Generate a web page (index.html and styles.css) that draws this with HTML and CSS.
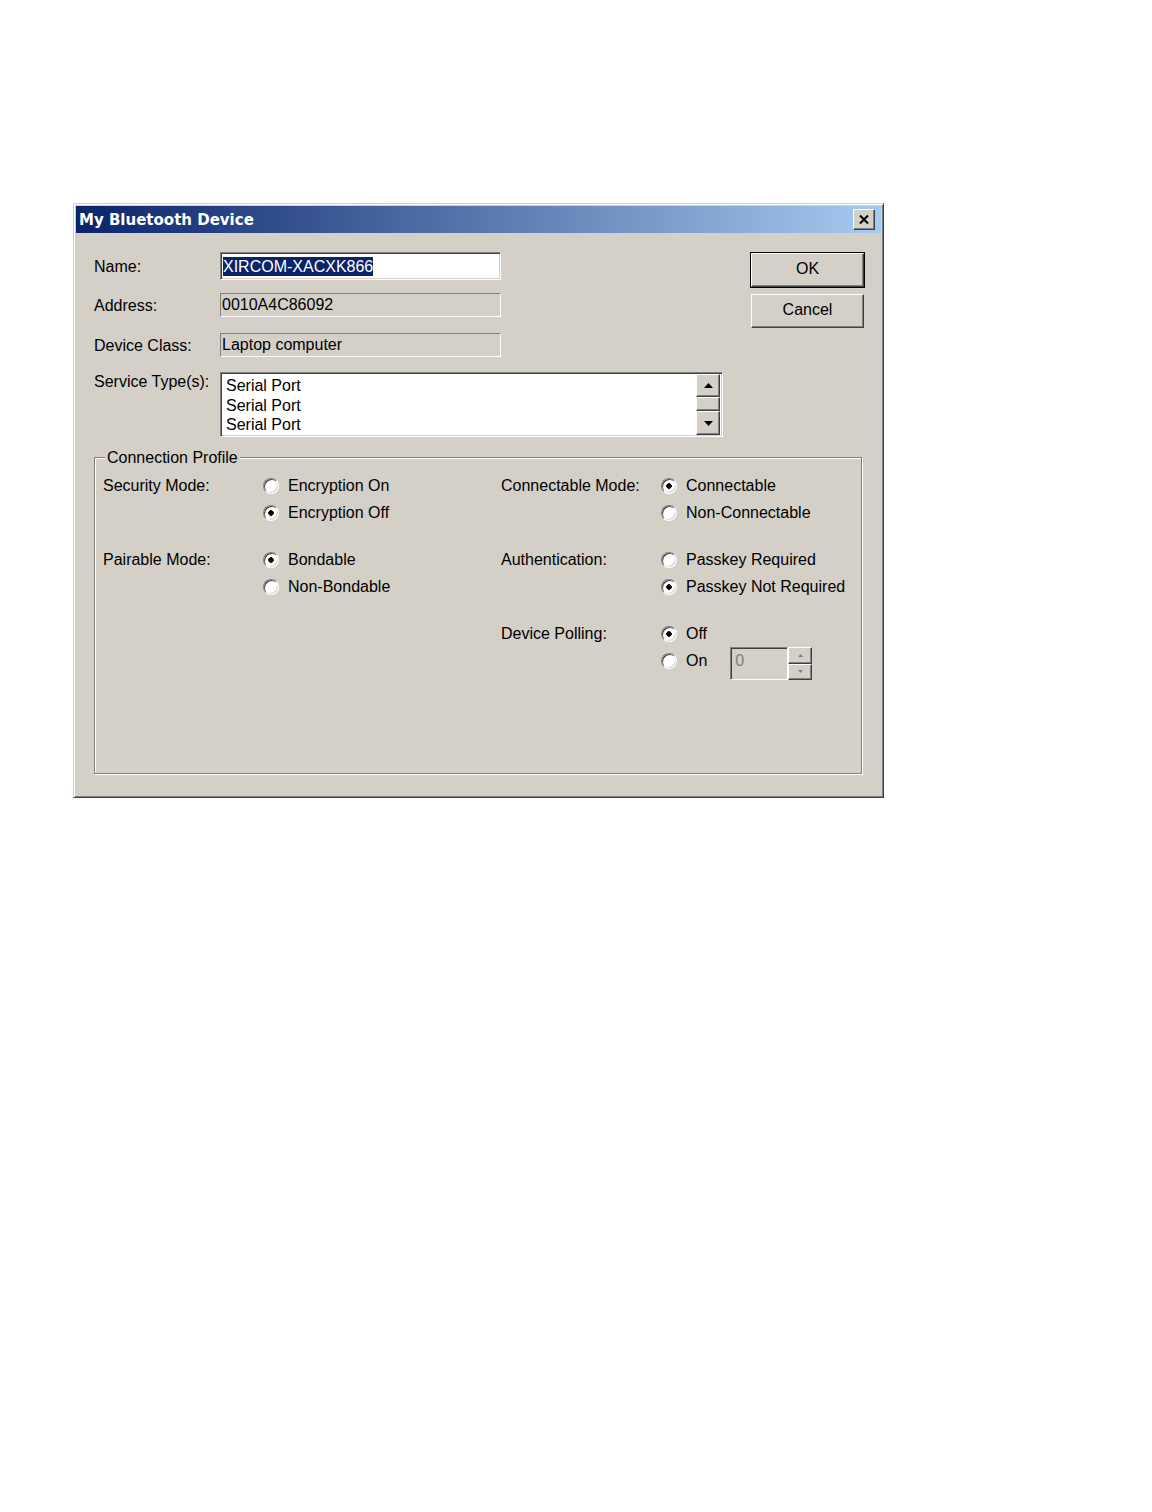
FILE: index.html
```html
<!DOCTYPE html>
<html lang="en">
<head>
  <meta charset="UTF-8" />
  <meta name="viewport" content="width=device-width, initial-scale=1" />
  <title>My Bluetooth Device</title>
  <link rel="stylesheet" href="styles.css">
</head>
<body>
  <div class="window">
    <div class="titlebar">
      <span class="title">My Bluetooth Device</span>
      <button class="close-btn" title="Close">
        <svg width="10" height="9" viewBox="0 0 10 9"><path d="M1 0.5 L9 8.5 M9 0.5 L1 8.5" stroke="#000" stroke-width="2"/></svg>
      </button>
    </div>

    <div class="content">
      <div class="top">
        <div class="form">
          <div class="lbl lbl-name">Name:</div>
          <div class="edit name-edit"><span class="sel">XIRCOM-XACXK866</span></div>

          <div class="lbl">Address:</div>
          <div class="edit ro">0010A4C86092</div>

          <div class="lbl">Device Class:</div>
          <div class="edit ro">Laptop computer</div>

          <div class="lbl lbl-top">Service Type(s):</div>
          <div class="listbox">
            <div class="items">
              <div>Serial Port</div>
              <div>Serial Port</div>
              <div>Serial Port</div>
            </div>
            <div class="vscroll">
              <div class="sb-btn sb-up">
                <svg width="9" height="5" viewBox="0 0 9 5"><polygon points="4.5,0 9,5 0,5" fill="#000"/></svg>
              </div>
              <div class="sb-thumb"></div>
              <div class="sb-btn sb-down">
                <svg width="9" height="5" viewBox="0 0 9 5"><polygon points="0,0 9,0 4.5,5" fill="#000"/></svg>
              </div>
            </div>
          </div>
        </div>

        <div class="buttons">
          <button class="btn default">OK</button>
          <button class="btn">Cancel</button>
        </div>
      </div>

      <fieldset class="group">
        <legend>Connection Profile</legend>
        <div class="group-grid">
          <div class="sec">
            <div class="flabel">Security Mode:</div>
            <div class="opts">
              <label class="opt"><input type="radio" class="radio" name="sec"> Encryption On</label>
              <label class="opt"><input type="radio" class="radio" name="sec" checked> Encryption Off</label>
            </div>
          </div>
          <div class="sec">
            <div class="flabel">Connectable Mode:</div>
            <div class="opts">
              <label class="opt"><input type="radio" class="radio" name="conn" checked> Connectable</label>
              <label class="opt"><input type="radio" class="radio" name="conn"> Non-Connectable</label>
            </div>
          </div>
          <div class="sec">
            <div class="flabel">Pairable Mode:</div>
            <div class="opts">
              <label class="opt"><input type="radio" class="radio" name="pair" checked> Bondable</label>
              <label class="opt"><input type="radio" class="radio" name="pair"> Non-Bondable</label>
            </div>
          </div>
          <div class="sec">
            <div class="flabel">Authentication:</div>
            <div class="opts">
              <label class="opt"><input type="radio" class="radio" name="auth"> Passkey Required</label>
              <label class="opt"><input type="radio" class="radio" name="auth" checked> Passkey Not Required</label>
            </div>
          </div>
          <div class="sec sec-polling">
            <div class="flabel">Device Polling:</div>
            <div class="opts">
              <label class="opt"><input type="radio" class="radio" name="poll" checked> Off</label>
              <div class="opt">
                <label class="opt-inner"><input type="radio" class="radio" name="poll"> On</label>
                <div class="spin">
                  <div class="spin-edit">0</div>
                  <div class="spin-btns">
                    <div class="spin-btn">
                      <svg width="5" height="3" viewBox="0 0 5 3"><polygon points="2.5,0 5,3 0,3" fill="#808080"/></svg>
                    </div>
                    <div class="spin-btn">
                      <svg width="5" height="3" viewBox="0 0 5 3"><polygon points="0,0 5,0 2.5,3" fill="#808080"/></svg>
                    </div>
                  </div>
                </div>
              </div>
            </div>
          </div>
        </div>
      </fieldset>
    </div>
  </div>
</body>
</html>
```

FILE: styles.css
```css
body {
  margin: 0;
  background-color: #fff;
  font-family: "Liberation Sans", Arial, sans-serif;
  font-size: 16px;
  color: #000;
}

.window {
  box-sizing: border-box;
  width: 811px;
  margin: 203px 0 0 73px;
  padding: 2px;
  background-color: #d4d0c8;
  border: 1px solid;
  border-color: #d4d0c8 #404040 #404040 #d4d0c8;
  box-shadow: inset 1px 1px 0 #fff, inset -1px -1px 0 #808080;
}

.titlebar {
  height: 27px;
  display: flex;
  align-items: center;
  justify-content: space-between;
  padding: 0 6px 0 3px;
  background: linear-gradient(to right, #0a246a, #a6caf0);
}

.title {
  font-family: "DejaVu Sans", sans-serif;
  font-weight: bold;
  font-size: 15px;
  color: #fff;
}

.close-btn,
.btn,
.sb-btn,
.sb-thumb,
.spin-btn {
  background-color: #d4d0c8;
  border: 1px solid;
  border-color: #fff #404040 #404040 #fff;
  box-shadow: inset -1px -1px 0 #808080;
  box-sizing: border-box;
}

.close-btn {
  width: 22px;
  height: 21px;
  padding: 0;
  display: flex;
  align-items: center;
  justify-content: center;
}

.content {
  padding: 19px 17px 21px 18px;
}

.top {
  display: flex;
  justify-content: space-between;
}

.form {
  display: grid;
  grid-template-columns: 126px auto;
  grid-template-rows: 28px 24px 27px 67px;
  row-gap: 13px;
}

.lbl {
  align-self: end;
  line-height: 23px;
}

.lbl-name {
  line-height: 27px;
}

.lbl-top {
  align-self: start;
  padding-top: 3px;
  line-height: 18px;
}

.edit {
  box-sizing: border-box;
  width: 281px;
  height: 24px;
  align-self: end;
  display: flex;
  align-items: center;
  padding: 0 1px;
  background-color: #fff;
  border: 1px solid;
  border-color: #808080 #fff #fff #808080;
  box-shadow: inset 1px 1px 0 #404040, inset -1px -1px 0 #d4d0c8;
  white-space: nowrap;
}

.name-edit {
  height: 28px;
  padding-left: 2px;
}

.sel {
  background-color: #0a246a;
  color: #fff;
  line-height: 19px;
}

.ro {
  background-color: #d4d0c8;
  box-shadow: none;
}

.listbox {
  box-sizing: border-box;
  width: 503px;
  height: 65px;
  align-self: end;
  display: flex;
  padding: 1px;
  background-color: #fff;
  border: 1px solid;
  border-color: #808080 #fff #fff #808080;
  box-shadow: inset 1px 1px 0 #404040, inset -1px -1px 0 #d4d0c8;
}

.items {
  flex: 1;
  padding: 2px 0 0 4px;
  line-height: 19.5px;
}

.vscroll {
  width: 24px;
  display: flex;
  flex-direction: column;
  margin-right: 1px;
}

.sb-btn {
  display: flex;
  align-items: center;
  justify-content: center;
}

.sb-up {
  height: 23px;
}

.sb-down {
  height: 24px;
}

.sb-thumb {
  flex: 1;
}

.buttons {
  width: 113px;
  display: flex;
  flex-direction: column;
  gap: 7px;
  padding-top: 1px;
}

.btn {
  height: 34px;
  padding: 0 0 2px;
  font-family: inherit;
  font-size: 16px;
  color: #000;
}

.btn.default {
  box-shadow: 0 0 0 1px #000, inset -1px -1px 0 #808080;
}

.group {
  margin: 11px 2px 0 0;
  padding: 5px 0 99px 8px;
  border: 1px solid #808080;
  box-shadow: 1px 1px 0 #fff, inset 1px 1px 0 #fff;
  min-width: 0;
}

.group legend {
  margin-left: 2px;
  padding: 0 2px;
  line-height: 19px;
  background-color: #d4d0c8;
}

.group-grid {
  display: grid;
  grid-template-columns: 398px 1fr;
  row-gap: 20px;
}

.sec {
  display: grid;
  grid-template-columns: 160px auto;
}

.sec-polling {
  grid-column: 2;
}

.flabel {
  line-height: 27px;
}

.opt,
.opt-inner {
  height: 27px;
  display: flex;
  align-items: center;
  white-space: nowrap;
}

.radio {
  appearance: none;
  -webkit-appearance: none;
  width: 16px;
  height: 16px;
  margin: 0 9px 0 0;
  border-radius: 50%;
  border: 1px solid;
  border-color: #808080 #fff #fff #808080;
  background-color: #fff;
  box-shadow: inset 1px 1px 0 #404040, inset -1px -1px 0 #d4d0c8;
}

.radio:checked {
  background: radial-gradient(circle, #000 0 2.5px, #fff 3px);
}

.spin {
  display: flex;
  margin: 6px 0 0 23px;
}

.spin-edit {
  box-sizing: border-box;
  width: 58px;
  height: 33px;
  padding: 4px 0 0 4px;
  color: #808080;
  border: 1px solid;
  border-color: #808080 #fff #fff #808080;
  box-shadow: inset 1px 1px 0 #404040;
}

.spin-btns {
  width: 24px;
  display: flex;
  flex-direction: column;
}

.spin-btn {
  height: 16.5px;
  display: flex;
  align-items: center;
  justify-content: center;
}
```
